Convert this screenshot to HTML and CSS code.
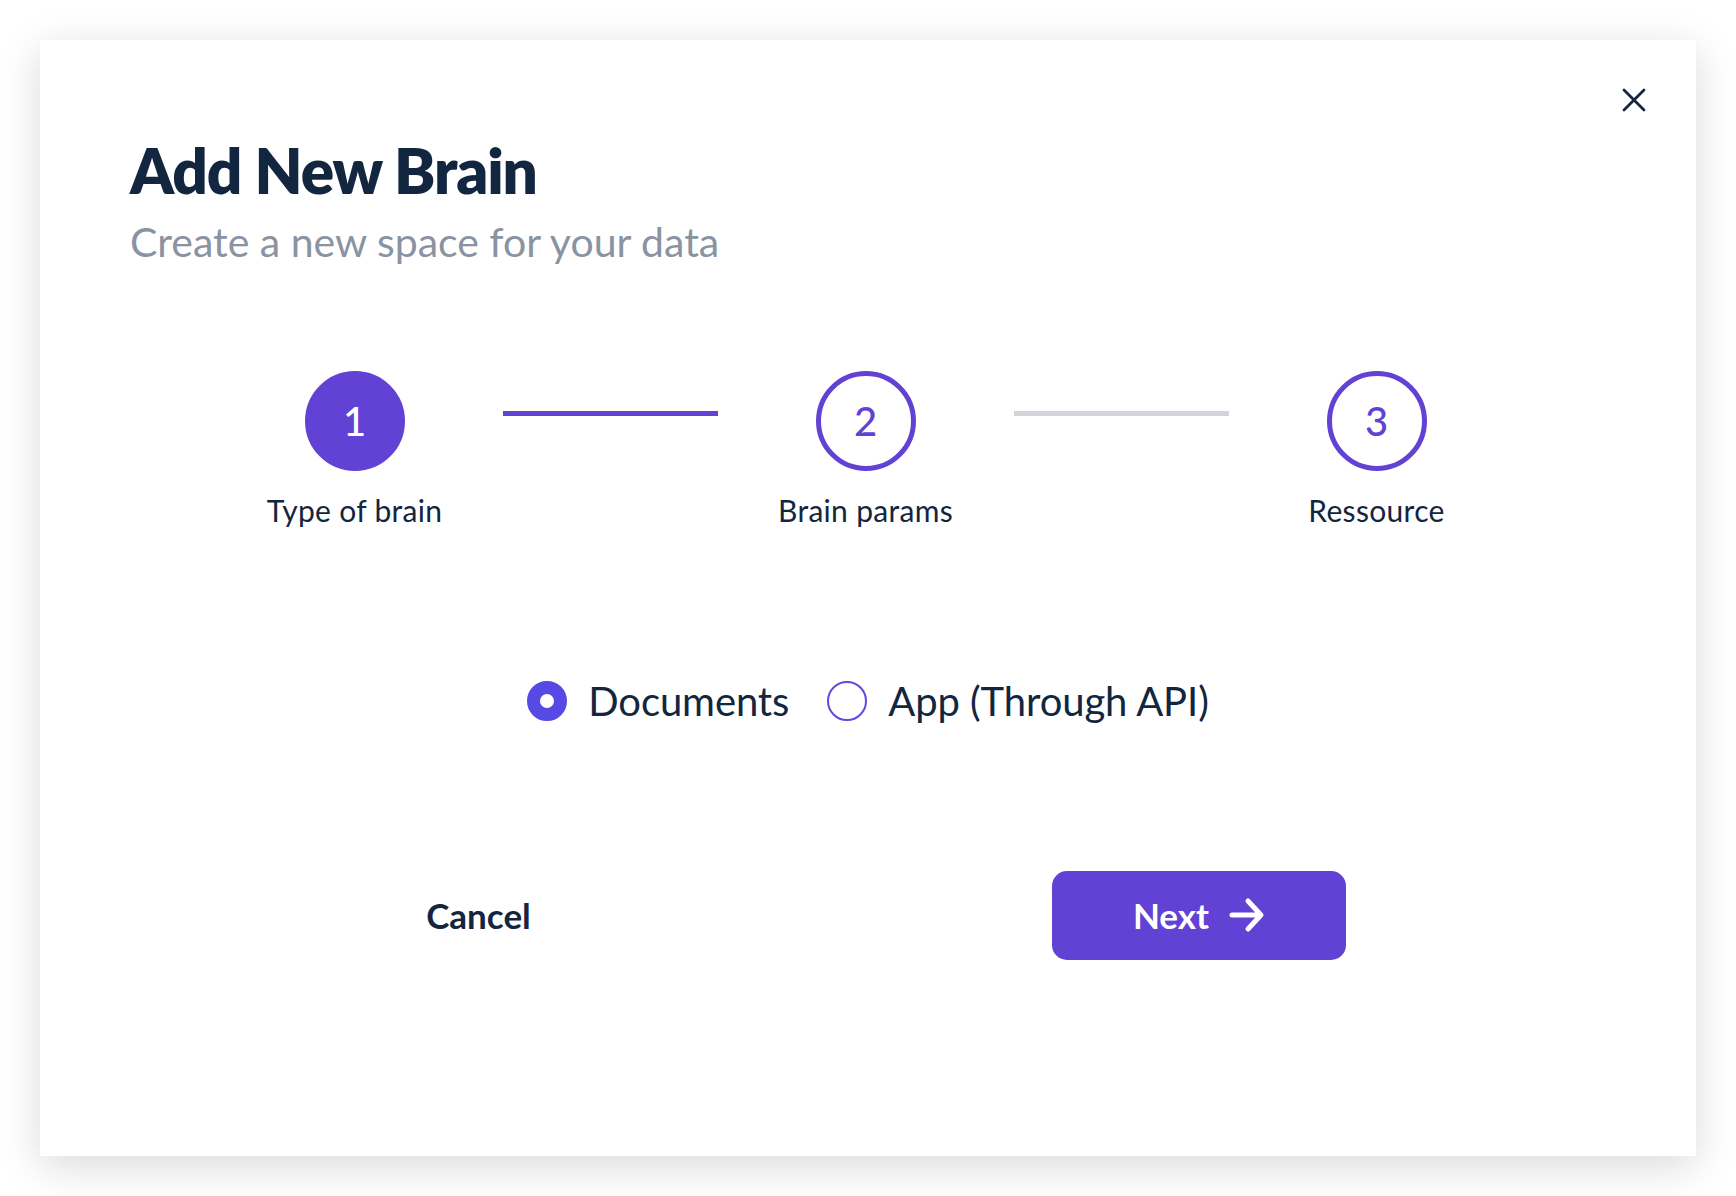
FILE: index.html
```html
<!DOCTYPE html>
<html lang="en">
<head>
<meta charset="utf-8">
<title>Add New Brain</title>
<link rel="stylesheet" href="styles.css">
</head>
<body>
<div class="modal">
  <button class="close" aria-label="Close">
    <svg width="24" height="24" viewBox="0 0 24 24"><path d="M2 2 L22 22 M22 2 L2 22" stroke="#142640" stroke-width="2.8" stroke-linecap="round" fill="none"/></svg>
  </button>
  <h1 class="title">Add New Brain</h1>
  <p class="subtitle">Create a new space for your data</p>

  <div class="stepper">
    <div class="step">
      <div class="circle active">1</div>
      <div class="step-label">Type of brain</div>
    </div>
    <div class="connector done"></div>
    <div class="step">
      <div class="circle">2</div>
      <div class="step-label">Brain params</div>
    </div>
    <div class="connector"></div>
    <div class="step">
      <div class="circle">3</div>
      <div class="step-label">Ressource</div>
    </div>
  </div>

  <div class="radios">
    <label class="radio-item">
      <span class="radio checked"></span>
      <span class="radio-text">Documents</span>
    </label>
    <label class="radio-item">
      <span class="radio"></span>
      <span class="radio-text">App (Through API)</span>
    </label>
  </div>

  <div class="actions">
    <button class="btn-cancel">Cancel</button>
    <button class="btn-next">Next
      <svg width="36" height="36" viewBox="0 0 36 36"><path d="M3 18 H31 M19 4 L32 18 L19 32" stroke="#fff" stroke-width="5" stroke-linecap="round" stroke-linejoin="round" fill="none"/></svg>
    </button>
  </div>
</div>
</body>
</html>
```
FILE: styles.css
```css
* { box-sizing: border-box; }
html, body { margin: 0; padding: 0; background: #ffffff; }
body {
  padding: 40px;
  font-family: "Lato", "Noto Sans", sans-serif;
  color: #132640;
}
.modal {
  position: relative;
  width: 1656px;
  height: 1116px;
  background: #fff;
  box-shadow: 0 10px 40px rgba(0, 0, 0, 0.15);
  padding: 93px 90px 0 90px;
}
.close {
  position: absolute;
  top: 48px;
  right: 50px;
  width: 24px;
  height: 24px;
  padding: 0;
  border: 0;
  background: none;
}
.close svg { display: block; }
.title {
  margin: 0;
  font-size: 62px;
  line-height: 1.2;
  font-weight: 800;
  color: #132640;
  letter-spacing: -1.1px;
}
.subtitle {
  margin: 10px 0 0 0;
  font-size: 41px;
  line-height: 1.2;
  font-weight: 400;
  color: #8a93a2;
}
.stepper {
  display: flex;
  justify-content: center;
  align-items: flex-start;
  margin-top: 104px;
  padding-right: 5px;
}
.step {
  width: 200px;
  display: flex;
  flex-direction: column;
  align-items: center;
}
.circle {
  width: 100px;
  height: 100px;
  border-radius: 50%;
  border: 5px solid #6142d4;
  color: #6142d4;
  display: flex;
  align-items: center;
  justify-content: center;
  font-size: 40px;
  font-weight: 500;
}
.circle.active {
  background: #6142d4;
  color: #fff;
}
.step-label {
  margin-top: 21px;
  font-size: 30px;
  line-height: 1.2;
  letter-spacing: 0.3px;
  white-space: nowrap;
  color: #132640;
}
.connector {
  width: 215px;
  height: 5px;
  margin: 40px 48px 0 48px;
  background: #d1d5db;
}
.connector.done { background: #6142d4; }
.radios {
  display: flex;
  justify-content: center;
  align-items: center;
  gap: 38px;
  margin-top: 149px;
}
.radio-item {
  display: flex;
  align-items: center;
  gap: 21px;
}
.radio {
  width: 40px;
  height: 40px;
  border-radius: 50%;
  border: 2px solid #5a4be6;
  background: #fff;
  flex: none;
}
.radio.checked {
  border: 13.5px solid #5749e3;
}
.radio-text {
  font-size: 40px;
  line-height: 1.2;
  letter-spacing: -0.1px;
  color: #132640;
}
.actions {
  display: flex;
  align-items: center;
  margin-top: 146px;
  padding-left: 202px;
  gap: 427px;
}
.btn-cancel {
  width: 293px;
  height: 89px;
  border: 0;
  background: none;
  font-family: inherit;
  font-size: 35px;
  font-weight: 700;
  color: #132640;
  padding: 0;
}
.btn-next {
  width: 294px;
  height: 89px;
  border: 0;
  border-radius: 15px;
  background: #6142d4;
  color: #fff;
  font-family: inherit;
  font-size: 35px;
  font-weight: 700;
  display: flex;
  align-items: center;
  justify-content: center;
  gap: 20px;
  padding: 0;
}
.btn-next svg { display: block; }
```
